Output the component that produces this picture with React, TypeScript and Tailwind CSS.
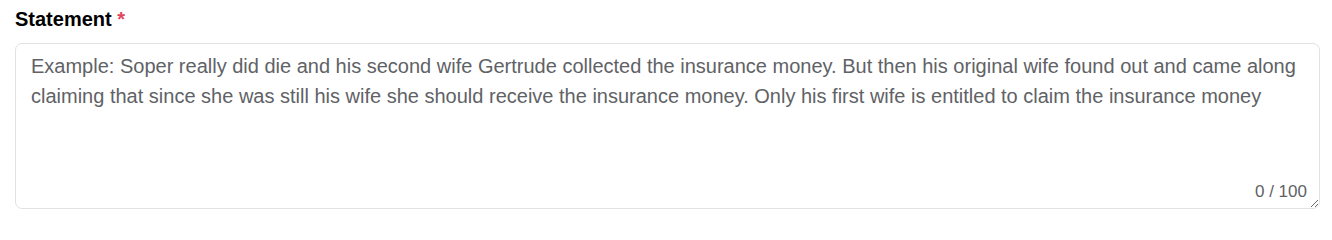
import React from "react";

export default function App() {
  return (
    <div className="w-[1332px] h-[218px] bg-white px-[15px] pt-[7px]" style={{ fontFamily: '"Liberation Sans", Arial, sans-serif' }}>
      <div className="text-[20px] font-bold text-black leading-[24px] mb-[12px]">
        Statement <span className="text-[#e0455c]">*</span>
      </div>
      <div className="relative w-[1305px]">
        <textarea
          className="block w-full h-[166px] rounded-[7px] border border-[#e2e2e6] bg-white pl-[15px] pr-[15px] pt-[8px] text-[20px] leading-[29.5px] text-[#606266] placeholder:text-[#606266] outline-none resize-y"
          style={{ fontFamily: '"Liberation Sans", Arial, sans-serif' }}
          placeholder="Example: Soper really did die and his second wife Gertrude collected the insurance money. But then his original wife found out and came along claiming that since she was still his wife she should receive the insurance money. Only his first wife is entitled to claim the insurance money"
        />
        <span className="absolute right-[13px] bottom-[7px] text-[17px] leading-[20px] text-[#606266]">0 / 100</span>
      </div>
    </div>
  );
}
